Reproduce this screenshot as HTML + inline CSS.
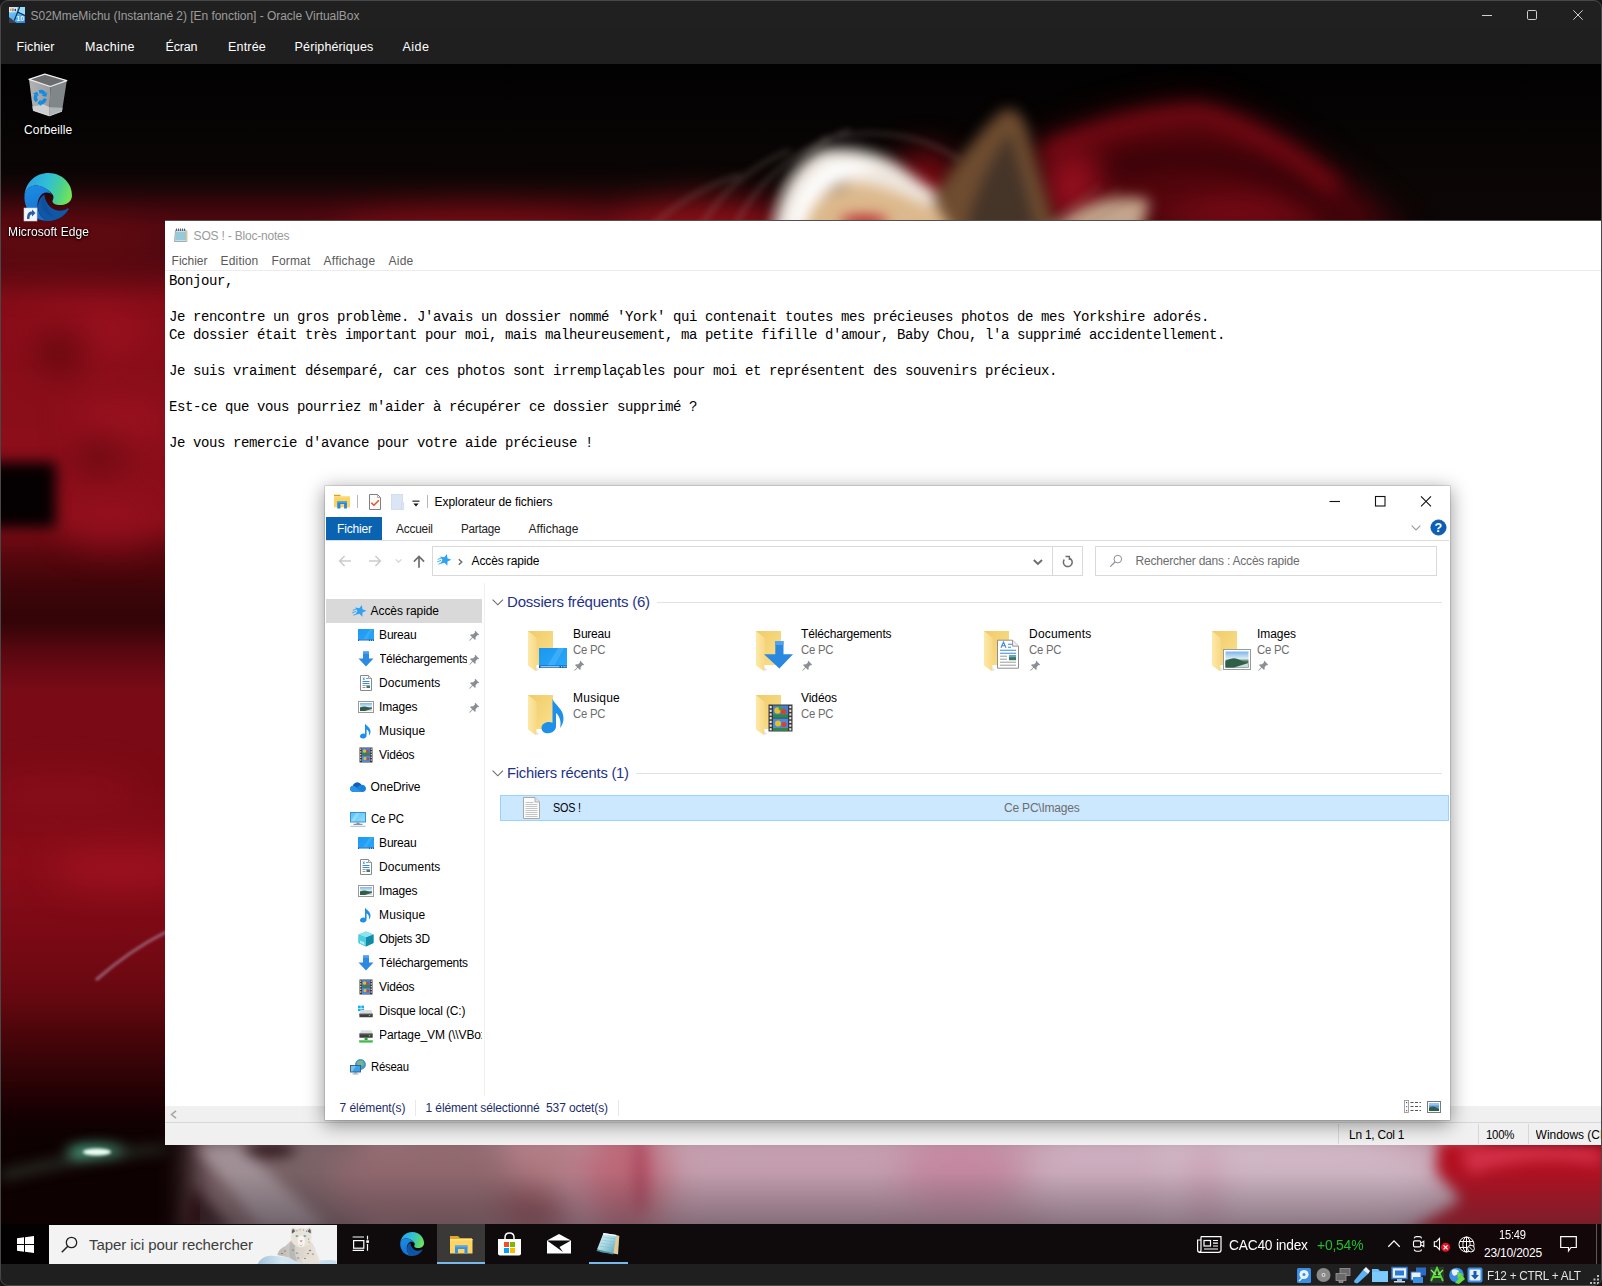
<!DOCTYPE html>
<html lang="fr"><head><meta charset="utf-8"><title>S02MmeMichu - Oracle VirtualBox</title>
<style>
html,body{margin:0;padding:0}
body{width:1602px;height:1286px;position:relative;overflow:hidden;background:#161616;font-family:"Liberation Sans",sans-serif;font-size:12px;color:#000}
.a{position:absolute}
.t{position:absolute;white-space:nowrap;line-height:16px;height:16px}
svg{position:absolute;overflow:visible}
.mono{font-family:"Liberation Mono",monospace;font-size:14px;letter-spacing:-0.402px;line-height:18px;white-space:pre;color:#000}
</style></head><body>
<!-- VM screen wallpaper -->
<div class="a" style="left:1px;top:64px;width:1600px;height:1200px;background:#040202;overflow:hidden">
<svg width="1600" height="1200" viewBox="1 64 1600 1200" style="left:0;top:0">
<defs>
<filter id="b30" x="-100%" y="-200%" width="300%" height="500%" color-interpolation-filters="sRGB"><feGaussianBlur stdDeviation="30"/></filter>
<filter id="b18" x="-100%" y="-200%" width="300%" height="500%" color-interpolation-filters="sRGB"><feGaussianBlur stdDeviation="16"/></filter>
<filter id="b8" x="-100%" y="-200%" width="300%" height="500%" color-interpolation-filters="sRGB"><feGaussianBlur stdDeviation="7"/></filter>
<filter id="b4" x="-100%" y="-200%" width="300%" height="500%" color-interpolation-filters="sRGB"><feGaussianBlur stdDeviation="3.5"/></filter>
<filter id="b2" x="-100%" y="-200%" width="300%" height="500%" color-interpolation-filters="sRGB"><feGaussianBlur stdDeviation="1.6"/></filter>
<linearGradient id="lstrip" x1="0" y1="220" x2="0" y2="1224" gradientUnits="userSpaceOnUse">
<stop offset="0" stop-color="#3c0509"/><stop offset=".03" stop-color="#6a0a12"/><stop offset=".08" stop-color="#880d19"/>
<stop offset=".3" stop-color="#8c0e1a"/><stop offset=".33" stop-color="#5c070e"/><stop offset=".365" stop-color="#3e0509"/>
<stop offset=".4" stop-color="#310407"/><stop offset=".43" stop-color="#5a0710"/><stop offset=".47" stop-color="#7a0b16"/><stop offset=".56" stop-color="#7a0a15"/>
<stop offset=".64" stop-color="#8a0c18"/><stop offset=".72" stop-color="#780914"/><stop offset=".775" stop-color="#660810"/><stop offset=".81" stop-color="#4a050a"/>
<stop offset=".85" stop-color="#300306"/><stop offset=".89" stop-color="#1a0103"/><stop offset=".94" stop-color="#100102"/><stop offset="1" stop-color="#0c0102"/>
</linearGradient>
<linearGradient id="tstrip" x1="0" y1="64" x2="0" y2="224" gradientUnits="userSpaceOnUse"><stop offset="0" stop-color="#020101"/><stop offset=".3" stop-color="#050303"/><stop offset=".75" stop-color="#0b0605"/><stop offset="1" stop-color="#0c0505"/></linearGradient>
<linearGradient id="bshade" x1="0" y1="1145" x2="0" y2="1224" gradientUnits="userSpaceOnUse"><stop offset="0" stop-color="#3a3038" stop-opacity="0"/><stop offset=".35" stop-color="#3a3038" stop-opacity=".05"/><stop offset="1" stop-color="#3a3038" stop-opacity=".46"/></linearGradient>
</defs>
<!-- left strip -->
<rect x="-40" y="215" width="260" height="1050" fill="url(#lstrip)" filter="url(#b8)"/>
<g filter="url(#b18)">
<ellipse cx="90" cy="330" rx="60" ry="30" fill="#a01222" opacity=".6"/>
<ellipse cx="120" cy="420" rx="50" ry="18" fill="#a81424" opacity=".6"/>
<ellipse cx="60" cy="350" rx="25" ry="25" fill="#5a060c" opacity=".7"/>
<ellipse cx="100" cy="455" rx="25" ry="20" fill="#5a060c" opacity=".6"/>
<ellipse cx="120" cy="870" rx="70" ry="22" fill="#a81424" opacity=".6"/>
<ellipse cx="60" cy="790" rx="80" ry="18" fill="#96101e" opacity=".5"/>
<ellipse cx="110" cy="520" rx="45" ry="30" fill="#981020" opacity=".6"/>
</g>
<rect x="-20" y="462" width="76" height="66" fill="#050001" filter="url(#b8)"/>
<!-- top strip -->
<rect x="1" y="64" width="1600" height="160" fill="url(#tstrip)"/>
<g filter="url(#b18)">
<rect x="-60" y="200" width="840" height="80" fill="#540810"/>
<ellipse cx="480" cy="236" rx="150" ry="30" fill="#7a0c14"/>
<ellipse cx="700" cy="232" rx="90" ry="34" fill="#8a1018"/>
<ellipse cx="60" cy="236" rx="90" ry="30" fill="#5e0910"/>
</g>
<g filter="url(#b18)">
<path d="M1030 150 Q1120 104 1200 104 Q1290 122 1405 235 L1030 235 Z" fill="#52050c"/>
<path d="M1140 235 Q1230 170 1350 235 Z" fill="#860b17"/>
<ellipse cx="925" cy="190" rx="34" ry="40" fill="#7a0a12"/>
<ellipse cx="1072" cy="185" rx="24" ry="36" fill="#9a1020"/>
</g>
<g filter="url(#b8)">
<path d="M1045 154 Q1120 118 1200 114 Q1262 130 1335 190" fill="none" stroke="#8c0c18" stroke-width="16" opacity=".8" filter="url(#b8)"/>
<path d="M1110 168 Q1200 146 1270 172 Q1310 192 1345 225" fill="none" stroke="#2e0206" stroke-width="24" opacity=".6" filter="url(#b8)"/>
<!-- dog: cream interior, white hair arc, ear -->
<path d="M790 235 Q815 185 870 180 Q940 195 1010 235 Z" fill="#dcb88c"/>
<path d="M772 236 Q780 170 822 150 Q866 144 900 166 Q940 198 975 214 L1040 236 L1000 236 Q950 214 905 196 Q870 180 842 184 Q812 196 800 236 Z" fill="#efe8e0"/>
<path d="M790 226 Q800 176 836 162 Q862 160 880 170 Q846 172 826 188 Q810 204 804 230 Z" fill="#ffffff"/>
<path d="M933 200 Q962 150 1000 112 Q1018 102 1027 128 Q1040 180 1058 235 L955 235 Z" fill="#6e4c30"/>
<path d="M968 220 Q988 160 1010 134 Q1026 190 1038 235 L975 235 Z" fill="#453428"/>
<path d="M1046 235 Q1090 188 1150 200 L1140 235 Z" fill="#c4a48c"/>
<ellipse cx="864" cy="222" rx="24" ry="6" fill="#b01020"/>
</g>
<g filter="url(#b4)" fill="none" stroke="#b0a098" stroke-width="2" opacity=".5">
<path d="M770 225 Q790 150 850 130"/><path d="M735 225 Q770 160 830 140"/><path d="M700 228 Q730 175 790 150"/>
<path d="M820 140 Q900 120 960 160"/><path d="M650 228 Q690 190 740 175"/>
<path d="M1060 230 L1120 190 M1075 232 L1135 196 M1050 222 L1100 186" stroke="#8a6a5a"/>
</g>
<!-- bottom strip -->
<g filter="url(#b18)">
<rect x="180" y="1120" width="1300" height="140" fill="#c8a0b0"/>
<rect x="-20" y="1120" width="215" height="140" fill="#0e0102"/>
<rect x="200" y="1120" width="170" height="140" fill="#7c6468"/>
<ellipse cx="440" cy="1185" rx="110" ry="60" fill="#936a70"/>
<ellipse cx="545" cy="1160" rx="40" ry="30" fill="#b47c84"/>
<ellipse cx="535" cy="1215" rx="36" ry="22" fill="#8e4a52"/>
<ellipse cx="625" cy="1180" rx="42" ry="60" fill="#c06a7a"/>
<ellipse cx="790" cy="1190" rx="110" ry="60" fill="#c8a2b2"/>
<ellipse cx="960" cy="1170" rx="60" ry="40" fill="#c88ca4"/>
<ellipse cx="1250" cy="1185" rx="190" ry="65" fill="#d4bac8"/>
<ellipse cx="1100" cy="1185" rx="70" ry="65" fill="#d0b0c2"/>
<ellipse cx="1205" cy="1190" rx="12" ry="50" fill="#cc9cb2"/>
</g>
<g filter="url(#b8)">
<path d="M196 1146 L240 1146 L330 1230 L262 1230 Z" fill="#a4949a"/>
<path d="M190 1185 L235 1232 L180 1232 Z" fill="#2a1216"/>
<ellipse cx="270" cy="1150" rx="26" ry="7" fill="#2a1418"/>
<ellipse cx="640" cy="1175" rx="7" ry="40" fill="#b04a62"/>
<path d="M1438 1140 L1620 1140 L1620 1235 L1404 1235 L1462 1200 L1436 1172 Z" fill="#b40f20"/>
<path d="M1460 1150 Q1530 1140 1600 1150 L1600 1165 Q1530 1152 1470 1175 Z" fill="#d83048"/>
<ellipse cx="97" cy="1152" rx="30" ry="6.500" fill="#58d0a8"/>
<path d="M1 1172 Q90 1150 165 1146 L165 1152 Q90 1158 1 1180 Z" fill="#3a4a38" opacity=".8"/>
</g>
<rect x="200" y="1145" width="1401" height="80" fill="url(#bshade)"/>
<g filter="url(#b2)">
<path d="M96 980 Q130 950 166 932" stroke="#b090a8" stroke-width="2.5" fill="none" opacity=".8"/>
<ellipse cx="97" cy="1152" rx="14" ry="3.500" fill="#eafff4"/>
</g>
</svg>
</div>
<!-- VirtualBox host window chrome -->
<div class="a" style="left:0;top:0;width:1602px;height:30px;background:#202020;border-radius:8px 8px 0 0"></div>
<div class="a" style="left:0;top:30px;width:1602px;height:34px;background:#1f1f1f"></div>
<svg width="16" height="16" viewBox="0 0 16 16" style="left:9px;top:7px">
<defs><linearGradient id="vbi" x1="0" y1="0" x2="1" y2="1"><stop offset="0" stop-color="#7fd0f8"/><stop offset=".6" stop-color="#4aaef0"/><stop offset="1" stop-color="#1f86f0"/></linearGradient></defs>
<rect x="0" y="0" width="16" height="16" fill="url(#vbi)"/>
<path d="M0 .300 L8.500 .300 L7.300 5.300 L0 5.300Z" fill="#e9f1f6"/>
<rect x="1" y="1.500" width="1.500" height="2.500" fill="#d8a040"/><rect x="3.300" y="1.300" width="1.300" height="3" fill="#8a6a58"/><rect x="5.600" y="1.800" width="1.400" height="2.400" fill="#2a3a8a"/>
<path d="M10.800 0 L16 0 L16 8 L9.300 5.200Z" fill="#a8e2fa" opacity=".85"/>
<path d="M0 10 L7.800 16 L0 16Z" fill="#3a3f4e"/>
<path d="M10.700 0 L5.300 13.500 M8.500 5 L16 8.500" stroke="#17283f" stroke-width="1.100" fill="none"/>
<text x="7.300" y="14" style="font-family:'Liberation Sans',sans-serif;font-weight:bold;font-size:7.200px" fill="#f4f6f8">10</text>
</svg>
<span class="t" style="left:30.6px;top:8px;font-size:12px;line-height:16px;height:16px;color:#9d9d9d;letter-spacing:-0.041px;">S02MmeMichu (Instantané 2) [En fonction] - Oracle VirtualBox</span>
<span class="t" style="left:16.6px;top:38.5px;font-size:12.5px;line-height:16px;height:16px;color:#ffffff;letter-spacing:0.041px;">Fichier</span>
<span class="t" style="left:85.1px;top:38.5px;font-size:12.5px;line-height:16px;height:16px;color:#ffffff;letter-spacing:0.364px;">Machine</span>
<span class="t" style="left:165.6px;top:38.5px;font-size:12.5px;line-height:16px;height:16px;color:#ffffff;letter-spacing:-0.171px;">Écran</span>
<span class="t" style="left:228.1px;top:38.5px;font-size:12.5px;line-height:16px;height:16px;color:#ffffff;letter-spacing:0.159px;">Entrée</span>
<span class="t" style="left:294.6px;top:38.5px;font-size:12.5px;line-height:16px;height:16px;color:#ffffff;letter-spacing:0.128px;">Périphériques</span>
<span class="t" style="left:402.6px;top:38.5px;font-size:12.5px;line-height:16px;height:16px;color:#ffffff;letter-spacing:0.442px;">Aide</span>
<svg width="120" height="30" viewBox="1470 0 120 30" style="left:1470px;top:0" fill="none" stroke="#cfcfcf" stroke-width="1">
<path d="M1482 15.5 H1492"/><rect x="1527.5" y="10.5" width="9" height="9" rx="1.2"/><path d="M1573.3 10.3 L1582.7 19.7 M1582.7 10.3 L1573.3 19.7"/>
</svg>
<!-- VirtualBox status bar -->
<div class="a" style="left:0;top:1264px;width:1602px;height:22px;background:#1f1f1f;border-radius:0 0 8px 8px"></div>
<!-- Desktop icons -->
<svg width="40" height="44" viewBox="0 0 40 44" style="left:28px;top:73px">
<defs><linearGradient id="bin1" x1="0" x2="1"><stop offset="0" stop-color="#b6b8ba"/><stop offset="1" stop-color="#9fa1a3"/></linearGradient></defs>
<path d="M1 6.300 L16.800 1.100 L38.800 7.600 L22.300 13.500 Z" fill="#6b6c6d"/>
<path d="M1 6.300 L22.300 13.500 L21.400 42.900 L5 37.400 Z" fill="url(#bin1)" opacity=".97"/>
<path d="M22.300 13.500 L38.800 7.600 L34 38.300 L21.400 42.900 Z" fill="#858a8d" opacity=".97"/>
<path d="M4.300 33.500 L16 31.600 L21.600 34.200 L21.400 42.900 L5 37.400 Z" fill="#d2d4d6" opacity=".9"/>
<path d="M21.600 34.200 L34.600 34.800 L34 38.300 L21.400 42.900Z" fill="#b4b9bc" opacity=".9"/>
<path d="M1 6.300 L16.800 1.100 L38.800 7.600 L22.300 13.500 Z" fill="none" stroke="#eceeef" stroke-width="1.300" stroke-linejoin="round"/>
<path d="M5 37.400 L21.400 42.900 L34 38.300" fill="none" stroke="#e4e6e8" stroke-width=".8" opacity=".8"/>
<g><path d="M11.11 18.79 A5.0 5.60 0 0 1 16.50 20.99" fill="none" stroke="#0f8be6" stroke-width="3.4"/><path d="M13.70 22.74 L18.30 23.87 L19.29 19.24Z" fill="#0f8be6"/><path d="M17.23 25.65 A5.0 5.60 0 0 1 12.84 29.78" fill="none" stroke="#0f8be6" stroke-width="3.4"/><path d="M12.51 26.49 L9.45 30.11 L13.16 33.06Z" fill="#0f8be6"/><path d="M8.86 28.16 A5.0 5.60 0 0 1 7.87 21.83" fill="none" stroke="#0f8be6" stroke-width="3.4"/><path d="M10.91 23.10 L9.18 18.69 L4.82 20.56Z" fill="#0f8be6"/></g>
</svg>
<span class="t" style="left:24.1px;top:122px;font-size:12px;line-height:16px;height:16px;color:#ffffff;letter-spacing:0.105px;text-shadow:0 1px 2px #000,0 0 3px #000;">Corbeille</span>
<svg width="48" height="48" viewBox="0 0 48 48" style="left:24px;top:173px">
<defs><linearGradient id="dEG1" x1="0" y1="0.300" x2="1" y2="0.550"><stop offset="0" stop-color="#2a9fe8"/><stop offset=".45" stop-color="#30bfd6"/><stop offset=".75" stop-color="#4ad090"/><stop offset="1" stop-color="#74e456"/></linearGradient><linearGradient id="dEG2" x1="0" y1="0" x2="0.300" y2="1"><stop offset="0" stop-color="#1d8de4"/><stop offset="1" stop-color="#1670d2"/></linearGradient></defs><path d="M0.500 22.500 C1.500 9 12 0 24.500 0 C38.500 0 48.500 11 48 23 C47.600 29.500 41.500 32.500 34.500 32 C30.500 31.600 27.800 29.800 28.600 27.500 C29.800 25.500 30 22.500 27.800 20.500 C24.500 17 19 12.800 11.500 12.600 C6 13 1.500 17 0.500 22.500 Z" fill="url(#dEG1)"/>
<path d="M0.500 22.500 C1.500 16.500 6 12.800 12 12.600 C19.500 12.700 25 17 28.300 22 C25.500 19.300 21.500 19 19 20.500 C15 23 13 29 13.600 34 C14.200 39.500 17 44.500 22 47.900 C9.500 47 -0.500 36 0.500 22.500 Z" fill="url(#dEG2)"/>
<path d="M20.200 21.500 C16 24.500 13.500 30 14 35 C14.600 40.500 17.500 45 22 47.900 C29 48.500 35.500 46 40 42 C42.200 40 43.800 38 44.600 36.300 C45 35.300 44.200 34.900 43.400 35.500 C40 37.800 35.500 38.300 31.500 37 C26 35 21.500 30 20.200 21.500 Z" fill="#1057a8"/>
<path d="M20.200 21.500 C18 23.500 16.800 28 17.500 33 C19 38 24 43 31 44 C26 41 21 32 20.200 21.500Z" fill="#0c4a94" opacity=".5"/>
<rect x="0" y="35" width="13" height="13" fill="#f4f6f8" stroke="#c8ccd0" stroke-width=".6"/>
<path d="M3 46 C3 40 5 38.500 8 38.500 L8 36.500 L11.500 40 L8 43.500 L8 41.500 C6 41.500 5.500 43 5.500 46 Z" fill="#2a5ea8"/>
</svg>
<span class="t" style="left:8.1px;top:224px;font-size:12px;line-height:16px;height:16px;color:#ffffff;letter-spacing:0.054px;text-shadow:0 1px 2px #000,0 0 3px #000;">Microsoft Edge</span>
<!-- Notepad window -->
<div class="a" style="left:165px;top:220px;width:1436px;height:925px;background:#fff;border-top:1px solid rgba(40,30,30,.78);box-sizing:border-box"></div>
<div class="a" style="left:165px;top:270px;width:1436px;height:1px;background:#ececec"></div>
<div class="a" style="left:165px;top:1106px;width:1436px;height:39px;background:#f0f0f0"></div>
<div class="a" style="left:165px;top:1122px;width:1436px;height:1px;background:#d7d7d7"></div>
<svg width="16" height="16" viewBox="0 0 16 16" style="left:173px;top:227px">
<path d="M2.500 3 L13 3 L13.500 14.500 L1.500 14.500 Z" fill="#bfe3ee" stroke="#8a8f94" stroke-width=".7"/>
<path d="M12.500 3 L14.500 4 L14.500 15 L13 14.500Z" fill="#d9c9a0"/>
<g stroke="#5f9fb6" stroke-width=".8"><path d="M3 6 H12.500 M3 8 H12.500 M2.800 10 H12.700 M2.600 12 H12.900"/></g>
<g stroke="#50545a" stroke-width=".9"><path d="M3.500 1.500 V4 M5.500 1.500 V4 M7.500 1.500 V4 M9.500 1.500 V4 M11.500 1.500 V4"/></g>
</svg>
<span class="t" style="left:193.6px;top:227.5px;font-size:12px;line-height:16px;height:16px;color:#9a9a9a;letter-spacing:-0.199px;">SOS ! - Bloc-notes</span>
<span class="t" style="left:171.6px;top:252.5px;font-size:12px;line-height:16px;height:16px;color:#5a5a5a;letter-spacing:-0.031px;">Fichier</span>
<span class="t" style="left:220.6px;top:252.5px;font-size:12px;line-height:16px;height:16px;color:#5a5a5a;letter-spacing:0.157px;">Edition</span>
<span class="t" style="left:271.6px;top:252.5px;font-size:12px;line-height:16px;height:16px;color:#5a5a5a;letter-spacing:0.131px;">Format</span>
<span class="t" style="left:323.6px;top:252.5px;font-size:12px;line-height:16px;height:16px;color:#5a5a5a;letter-spacing:0.219px;">Affichage</span>
<span class="t" style="left:388.6px;top:252.5px;font-size:12px;line-height:16px;height:16px;color:#5a5a5a;letter-spacing:0.192px;">Aide</span>
<div class="a mono" style="left:169.100px;top:272.300px">Bonjour,

Je rencontre un gros problème. J'avais un dossier nommé 'York' qui contenait toutes mes précieuses photos de mes Yorkshire adorés.
Ce dossier était très important pour moi, mais malheureusement, ma petite fifille d'amour, Baby Chou, l'a supprimé accidentellement.

Je suis vraiment désemparé, car ces photos sont irremplaçables pour moi et représentent des souvenirs précieux.

Est-ce que vous pourriez m'aider à récupérer ce dossier supprimé ?

Je vous remercie d'avance pour votre aide précieuse !</div>
<svg width="8" height="9" viewBox="0 0 8 9" style="left:169.500px;top:1109.500px"><path d="M6 .8 L1.500 4.500 L6 8.200" fill="none" stroke="#a6a6a6" stroke-width="1.600"/></svg>
<div class="a" style="left:1338px;top:1124px;width:1px;height:20px;background:#d7d7d7"></div>
<div class="a" style="left:1478px;top:1124px;width:1px;height:20px;background:#d7d7d7"></div>
<div class="a" style="left:1528px;top:1124px;width:1px;height:20px;background:#d7d7d7"></div>
<span class="t" style="left:1348.6px;top:1126.5px;font-size:12px;line-height:16px;height:16px;color:#000;letter-spacing:-0.220px;transform:scaleX(0.9941);transform-origin:0 50%;">Ln 1, Col 1</span>
<span class="t" style="left:1486.1px;top:1126.5px;font-size:12px;line-height:16px;height:16px;color:#000;letter-spacing:-0.220px;transform:scaleX(0.9489);transform-origin:0 50%;">100%</span>
<div class="a" style="left:1536px;top:1126px;width:65px;height:17px;overflow:hidden"><span class="t" style="left:-0.4px;top:0.5px;font-size:12px;line-height:16px;height:16px;color:#000;letter-spacing:-0.039px;">Windows (CRLF)</span></div>
<!-- File Explorer window -->
<div class="a" style="left:325px;top:486px;width:1125px;height:634px;background:#fff;box-shadow:0 0 0 .6px rgba(0,0,0,.2),0 4px 18px 1px rgba(0,0,0,.40)"></div>
<svg width="17" height="16" viewBox="0 0 17 16" style="left:334px;top:493.500px"><path d="M0 .700 H6 L7.200 2.400 H0Z" fill="#dfa012"/><rect x="0" y="2.400" width="16" height="11" fill="#fcd462"/><rect x="0" y="2.400" width="16" height="1" fill="#fde08c"/><path d="M3.300 7.500 H12.900 V14.500 H10.100 V10 H6.400 V14.500 H3.300Z" fill="#2585e0"/><rect x="3.300" y="7.500" width="9.600" height="1.500" fill="#3f9bec"/></svg>
<div class="a" style="left:357px;top:495px;width:1px;height:13px;background:#b8b8b8"></div>
<svg width="14" height="17" viewBox="0 0 14 17" style="left:369px;top:494px"><path d="M.500 .500 H8.500 L11.500 3.500 V15.500 H.500 Z" fill="#fbfbfb" stroke="#808080" stroke-width="1" stroke-linejoin="miter"/><path d="M8.500 .500 V3.500 H11.500" fill="none" stroke="#9a9a9a" stroke-width=".8"/><path d="M2.300 8.700 L4.900 11.200 L9.900 6.200" fill="none" stroke="#e8501e" stroke-width="1.500"/></svg>
<svg width="14" height="17" viewBox="0 0 14 17" style="left:391px;top:494.200px"><rect x=".300" y=".300" width="11.400" height="15.300" fill="#dbe5f4" stroke="#c6d4ea" stroke-width=".600"/><rect x="10.800" y="8.800" width="2" height="6.800" fill="#e1e9f6" stroke="#c6d4ea" stroke-width=".600"/></svg>
<svg width="8" height="8" viewBox="0 0 8 8" style="left:411.500px;top:498.500px"><rect x=".400" y="1.600" width="7.100" height="1.100" fill="#111"/><path d="M1.400 4.600 H6.600 L4 7.500Z" fill="#111"/></svg>
<div class="a" style="left:427px;top:495px;width:1px;height:13px;background:#b8b8b8"></div>
<span class="t" style="left:434.6px;top:493.5px;font-size:12px;line-height:16px;height:16px;color:#000;letter-spacing:-0.069px;">Explorateur de fichiers</span>
<svg width="110" height="20" viewBox="1325 492 110 20" style="left:1325px;top:492px" fill="none" stroke="#111" stroke-width="1.100"><path d="M1329.500 501.500 H1340"/><rect x="1375.500" y="496.500" width="9.500" height="9.500"/><path d="M1421 496.300 L1431 506.300 M1431 496.300 L1421 506.300"/></svg>
<div class="a" style="left:326px;top:517px;width:56px;height:23px;background:#0a63b1"></div>
<span class="t" style="left:337.1px;top:521px;font-size:12px;line-height:16px;height:16px;color:#ffffff;letter-spacing:-0.174px;">Fichier</span>
<span class="t" style="left:395.6px;top:521px;font-size:12px;line-height:16px;height:16px;color:#222;letter-spacing:-0.220px;transform:scaleX(0.9906);transform-origin:0 50%;">Accueil</span>
<span class="t" style="left:461.1px;top:521px;font-size:12px;line-height:16px;height:16px;color:#222;letter-spacing:-0.220px;transform:scaleX(0.9706);transform-origin:0 50%;">Partage</span>
<span class="t" style="left:528.6px;top:521px;font-size:12px;line-height:16px;height:16px;color:#222;letter-spacing:-0.003px;">Affichage</span>
<div class="a" style="left:326px;top:540px;width:1123px;height:1px;background:#dadbdc"></div>
<svg width="10" height="6" viewBox="0 0 10 6" style="left:1410.800px;top:525.200px"><path d="M.700 .700 L5 5 L9.300 .700" fill="none" stroke="#9a9a9a" stroke-width="1.100"/></svg>
<svg width="17" height="17" viewBox="0 0 17 17" style="left:1429.500px;top:519.300px"><circle cx="8.500" cy="8.500" r="7.600" fill="#0c5fb6" stroke="#0a4c94" stroke-width=".8"/></svg>
<span class="t" style="left:1434.4px;top:520px;font-size:12.5px;line-height:16px;height:16px;color:#ffffff;font-weight:bold;">?</span>
<svg width="100" height="20" viewBox="335 551 100 20" style="left:335px;top:551px" fill="none" stroke-linecap="butt"><g stroke="#cbcbcb" stroke-width="1.500"><path d="M351 561 H339.800 M344.600 556 L339.600 561 L344.600 566"/><path d="M369 561 H380.200 M375.400 556 L380.400 561 L375.400 566"/></g><path d="M395.800 559.300 L398.600 562.100 L401.400 559.300" stroke="#d2d2d2" stroke-width="1.200"/><g stroke="#6e6e6e" stroke-width="1.700"><path d="M419 567.700 V557 M413.900 561.600 L419 556.500 L424.100 561.600"/></g></svg>
<div class="a" style="left:432px;top:546px;width:651px;height:30px;border:1px solid #d9d9d9;box-sizing:border-box;background:#fff"></div>
<div class="a" style="left:1052px;top:547px;width:1px;height:28px;background:#d9d9d9"></div>
<svg width="14" height="14" viewBox="0 0 16 16" style="left:437px;top:553px"><path d="M11.33 1.27 L11.92 6.03 L16.40 7.76 L12.05 9.79 L11.79 14.58 L8.52 11.08 L3.88 12.31 L6.20 8.11 L3.60 4.09 L8.31 4.99Z" fill="#2fa2f4"/><path d="M.800 7.400 L5 5.600 M.200 10.200 L4.800 8.300 M1.600 12.900 L5.800 10.900" stroke="#3aa4f2" stroke-width="1.100" fill="none"/></svg>
<svg width="5" height="8" viewBox="0 0 5 8" style="left:458px;top:557.500px"><path d="M.800 1.300 L3.700 4 L.800 6.700" fill="none" stroke="#6e6e6e" stroke-width="1.500"/></svg>
<span class="t" style="left:471.6px;top:553px;font-size:12px;line-height:16px;height:16px;color:#000;letter-spacing:-0.131px;">Accès rapide</span>
<svg width="10" height="7" viewBox="0 0 10 7" style="left:1033px;top:559px"><path d="M.800 1 L4.900 5 L9 1" fill="none" stroke="#6e6e6e" stroke-width="1.900"/></svg>
<svg width="14" height="14" viewBox="1061 555 14 14" style="left:1061px;top:555px" fill="none" stroke="#6e6e6e" stroke-width="1.500"><path d="M1069.600 558.200 A4.400 4.400 0 1 1 1064.300 559.500"/><path d="M1065.500 556.500 H1069.400 V560" stroke-width="1.400"/></svg>
<div class="a" style="left:1095px;top:546px;width:342px;height:30px;border:1px solid #d9d9d9;box-sizing:border-box;background:#fff"></div>
<svg width="13" height="13" viewBox="1109 554 13 13" style="left:1109px;top:554px"><circle cx="1117.800" cy="559.100" r="3.800" fill="none" stroke="#8c8c9c" stroke-width="1"/><path d="M1115 562 L1110.300 566.700" stroke="#8c8c9c" stroke-width="1.200"/></svg>
<span class="t" style="left:1135.6px;top:553px;font-size:12px;line-height:16px;height:16px;color:#6d6d6d;letter-spacing:-0.210px;">Rechercher dans : Accès rapide</span>
<div class="a" style="left:326px;top:599px;width:156px;height:24px;background:#d9d9d9"></div>
<div class="a" style="left:484px;top:583px;width:1px;height:513px;background:#f0f0f0"></div>
<svg width="14" height="14" viewBox="0 0 16 16" style="left:352px;top:604px"><path d="M11.33 1.27 L11.92 6.03 L16.40 7.76 L12.05 9.79 L11.79 14.58 L8.52 11.08 L3.88 12.31 L6.20 8.11 L3.60 4.09 L8.31 4.99Z" fill="#2fa2f4"/><path d="M.800 7.400 L5 5.600 M.200 10.200 L4.800 8.300 M1.600 12.900 L5.800 10.900" stroke="#3aa4f2" stroke-width="1.100" fill="none"/></svg>
<span class="t" style="left:370.6px;top:603px;font-size:12px;line-height:16px;height:16px;color:#000;letter-spacing:-0.090px;">Accès rapide</span>
<svg width="16" height="16" viewBox="0 0 16 16" style="left:358px;top:627px"><defs><linearGradient id="dks1" x1="0" y1="0" x2="1" y2="1"><stop offset="0" stop-color="#1c9bf2"/><stop offset="1" stop-color="#2aa5f8"/></linearGradient></defs><rect x="0" y="2" width="16" height="12" fill="url(#dks1)"/><path d="M4 14 L12 2 L15 2 L8 14Z" fill="#4ab6fb" opacity=".5"/><rect x="0" y="12.300" width="16" height="1.700" fill="#0a62b8"/><rect x="1" y="12.800" width="10" height=".8" fill="#d8ecfa"/><rect x="12" y="12.800" width="1" height=".8" fill="#fff"/><rect x="14" y="12.800" width="1" height=".8" fill="#fff"/></svg>
<span class="t" style="left:379.1px;top:627px;font-size:12px;line-height:16px;height:16px;color:#000;letter-spacing:-0.220px;">Bureau</span>
<svg width="11" height="11" viewBox="0 0 11 11" style="left:468.5px;top:629.5px"><path d="M6.300 .800 L10.200 4.700 L9.300 5.300 L8.600 5 L6.500 7.200 C6.900 8.300 6.700 9.300 6 10 L3.800 7.800 L.800 10.700 L.400 10.600 L.300 10.200 L3.200 7.200 L1 5 C1.700 4.300 2.700 4.100 3.800 4.500 L6 2.400 L5.700 1.700 Z" fill="#8a8f96"/></svg>
<svg width="16" height="16" viewBox="0 0 16 16" style="left:358px;top:651px"><path d="M5 0.500 H11 V7.500 H15.500 L8 15.500 L0.500 7.500 H5 Z" fill="#2b8ae2"/><path d="M5 0.500 H11 V3 H5Z" fill="#4aa0ee"/></svg>
<div class="a" style="left:379.5px;top:650px;width:87.0px;height:18px;overflow:hidden"><span class="t" style="left:-0.4px;top:1px;font-size:12px;line-height:16px;height:16px;color:#000;letter-spacing:-0.220px;transform:scaleX(0.9931);transform-origin:0 50%;">Téléchargements</span></div>
<svg width="11" height="11" viewBox="0 0 11 11" style="left:468.5px;top:653.5px"><path d="M6.300 .800 L10.200 4.700 L9.300 5.300 L8.600 5 L6.500 7.200 C6.900 8.300 6.700 9.300 6 10 L3.800 7.800 L.800 10.700 L.400 10.600 L.300 10.200 L3.200 7.200 L1 5 C1.700 4.300 2.700 4.100 3.800 4.500 L6 2.400 L5.700 1.700 Z" fill="#8a8f96"/></svg>
<svg width="16" height="16" viewBox="0 0 16 16" style="left:358px;top:675px"><path d="M2.500 .500 H10.500 L13.500 3.500 V15.500 H2.500 Z" fill="#fff" stroke="#8a8a8a" stroke-width="1"/><path d="M10.500 .500 V3.500 H13.500" fill="#e8e8e8" stroke="#8a8a8a" stroke-width=".8"/><g stroke="#3c8ad8" stroke-width="1"><path d="M4.500 6.500 H11.500 M4.500 8.500 H11.500"/></g><path d="M5 2.500 L6.500 5 M6.500 2.500 L5 5" stroke="#3c8ad8" stroke-width=".8"/><path d="M8 3.500 H10" stroke="#3c8ad8" stroke-width=".8"/><g stroke="#9a9a9a" stroke-width="1"><path d="M4.500 10.500 H7.500 M4.500 12.500 H7.500"/></g><rect x="8.500" y="10" width="3.500" height="3" fill="#3b7a57"/><rect x="8.500" y="10" width="3.500" height="1.200" fill="#6aa6dc"/></svg>
<span class="t" style="left:379.1px;top:675px;font-size:12px;line-height:16px;height:16px;color:#000;letter-spacing:0.066px;">Documents</span>
<svg width="11" height="11" viewBox="0 0 11 11" style="left:468.5px;top:677.5px"><path d="M6.300 .800 L10.200 4.700 L9.300 5.300 L8.600 5 L6.500 7.200 C6.900 8.300 6.700 9.300 6 10 L3.800 7.800 L.800 10.700 L.400 10.600 L.300 10.200 L3.200 7.200 L1 5 C1.700 4.300 2.700 4.100 3.800 4.500 L6 2.400 L5.700 1.700 Z" fill="#8a8f96"/></svg>
<svg width="16" height="16" viewBox="0 0 16 16" style="left:358px;top:699px"><defs><linearGradient id="ims4" x1="0" y1="0" x2="0" y2="1"><stop offset="0" stop-color="#7db7ea"/><stop offset=".45" stop-color="#dbeaf6"/><stop offset=".6" stop-color="#4c7a5a"/><stop offset="1" stop-color="#24503a"/></linearGradient></defs><rect x=".500" y="2.500" width="15" height="11" fill="#fff" stroke="#9a9a9a" stroke-width="1"/><rect x="2" y="4" width="12" height="8" fill="url(#ims4)"/><path d="M2 9 Q6 6.500 10 8.500 L14 10.500 V12 H2Z" fill="#2f5f48"/><path d="M7 12 L14 9.800 V12Z" fill="#e8eef2" opacity=".85"/></svg>
<span class="t" style="left:379.1px;top:699px;font-size:12px;line-height:16px;height:16px;color:#000;letter-spacing:-0.177px;">Images</span>
<svg width="11" height="11" viewBox="0 0 11 11" style="left:468.5px;top:701.5px"><path d="M6.300 .800 L10.200 4.700 L9.300 5.300 L8.600 5 L6.500 7.200 C6.900 8.300 6.700 9.300 6 10 L3.800 7.800 L.800 10.700 L.400 10.600 L.300 10.200 L3.200 7.200 L1 5 C1.700 4.300 2.700 4.100 3.800 4.500 L6 2.400 L5.700 1.700 Z" fill="#8a8f96"/></svg>
<svg width="16" height="16" viewBox="0 0 16 16" style="left:358px;top:723px"><path d="M7 .500 C8.500 3 12.500 4.500 12.500 8.500 C12.500 10.500 11.700 11.800 10.800 12.600 C11.600 10.200 10.800 7.600 8.600 6.200 V12.500 C8.600 14.500 6.800 15.600 5 15.600 C3.200 15.600 2 14.600 2 13.300 C2 11.800 3.500 10.600 5.400 10.600 C6 10.600 6.600 10.700 7 10.900 Z" fill="#1e90ea"/></svg>
<span class="t" style="left:379.1px;top:723px;font-size:12px;line-height:16px;height:16px;color:#000;letter-spacing:0.134px;">Musique</span>
<svg width="16" height="16" viewBox="0 0 16 16" style="left:358px;top:747px"><rect x="1.500" y=".500" width="13" height="15" fill="#3a3a3a"/><rect x="4" y="1" width="8" height="6.800" fill="#3f7fd6"/><rect x="4" y="8.400" width="8" height="6.600" fill="#4a8ade"/><circle cx="6.500" cy="4" r="1.700" fill="#e8c020"/><circle cx="9.500" cy="4.500" r="1.500" fill="#d84030"/><circle cx="7" cy="11.500" r="1.600" fill="#e8c020"/><circle cx="9.800" cy="12" r="1.400" fill="#d84030"/><rect x="4" y="6" width="8" height="1.800" fill="#2c8a3c"/><g fill="#e8e8e8"><rect x="2.200" y="1.500" width="1.100" height="1.400"/><rect x="2.200" y="4.200" width="1.100" height="1.400"/><rect x="2.200" y="6.900" width="1.100" height="1.400"/><rect x="2.200" y="9.600" width="1.100" height="1.400"/><rect x="2.200" y="12.300" width="1.100" height="1.400"/><rect x="12.700" y="1.500" width="1.100" height="1.400"/><rect x="12.700" y="4.200" width="1.100" height="1.400"/><rect x="12.700" y="6.900" width="1.100" height="1.400"/><rect x="12.700" y="9.600" width="1.100" height="1.400"/><rect x="12.700" y="12.300" width="1.100" height="1.400"/></g></svg>
<span class="t" style="left:379.1px;top:747px;font-size:12px;line-height:16px;height:16px;color:#000;letter-spacing:-0.197px;">Vidéos</span>
<svg width="16" height="16" viewBox="0 0 16 16" style="left:350px;top:779px"><path d="M3.800 13 C1.500 13 0 11.600 0 9.800 C0 8.100 1.300 6.900 2.900 6.700 C3.500 4.700 5.200 3.400 7.300 3.400 C9.100 3.400 10.600 4.300 11.400 5.800 C13.900 5.700 16 7.300 16 9.700 C16 11.600 14.500 13 12.500 13 Z" fill="#1a80d8"/><path d="M2.900 6.700 C3.500 4.700 5.200 3.400 7.300 3.400 C9.100 3.400 10.600 4.300 11.400 5.800 C9 6 7.600 7.600 6.600 9 C5.600 7.600 4.400 6.800 2.900 6.700Z" fill="#0f5fb8"/><path d="M3.800 13 C1.500 13 0 11.600 0 9.800 C0 8.100 1.300 6.900 2.900 6.700 C5 6.800 6.400 8.400 7.500 10 L12 13Z" fill="#2a94e6"/></svg>
<span class="t" style="left:370.6px;top:779px;font-size:12px;line-height:16px;height:16px;color:#000;letter-spacing:-0.111px;">OneDrive</span>
<svg width="16" height="16" viewBox="0 0 16 16" style="left:350px;top:811px"><defs><linearGradient id="pcgs8" x1="0" y1="0" x2="1" y2="1"><stop offset="0" stop-color="#4fc4f6"/><stop offset="1" stop-color="#9addfa"/></linearGradient></defs><rect x=".500" y="1.500" width="15" height="9.500" fill="url(#pcgs8)" stroke="#3a90d4" stroke-width="1"/><path d="M6 2 L10 2 L4 10.500 L1 10.500Z" fill="#fff" opacity=".25"/><rect x="6.500" y="11.500" width="3" height="1.500" fill="#8a9aa8"/><rect x="3.500" y="12.800" width="9" height="1" fill="#6a7a88"/><rect x=".500" y="14.800" width="15" height=".9" fill="#9ab0c8"/></svg>
<span class="t" style="left:370.6px;top:811px;font-size:12px;line-height:16px;height:16px;color:#000;letter-spacing:-0.220px;transform:scaleX(0.9578);transform-origin:0 50%;">Ce PC</span>
<svg width="16" height="16" viewBox="0 0 16 16" style="left:358px;top:835px"><defs><linearGradient id="dks9" x1="0" y1="0" x2="1" y2="1"><stop offset="0" stop-color="#1c9bf2"/><stop offset="1" stop-color="#2aa5f8"/></linearGradient></defs><rect x="0" y="2" width="16" height="12" fill="url(#dks9)"/><path d="M4 14 L12 2 L15 2 L8 14Z" fill="#4ab6fb" opacity=".5"/><rect x="0" y="12.300" width="16" height="1.700" fill="#0a62b8"/><rect x="1" y="12.800" width="10" height=".8" fill="#d8ecfa"/><rect x="12" y="12.800" width="1" height=".8" fill="#fff"/><rect x="14" y="12.800" width="1" height=".8" fill="#fff"/></svg>
<span class="t" style="left:379.1px;top:835px;font-size:12px;line-height:16px;height:16px;color:#000;letter-spacing:-0.220px;">Bureau</span>
<svg width="16" height="16" viewBox="0 0 16 16" style="left:358px;top:859px"><path d="M2.500 .500 H10.500 L13.500 3.500 V15.500 H2.500 Z" fill="#fff" stroke="#8a8a8a" stroke-width="1"/><path d="M10.500 .500 V3.500 H13.500" fill="#e8e8e8" stroke="#8a8a8a" stroke-width=".8"/><g stroke="#3c8ad8" stroke-width="1"><path d="M4.500 6.500 H11.500 M4.500 8.500 H11.500"/></g><path d="M5 2.500 L6.500 5 M6.500 2.500 L5 5" stroke="#3c8ad8" stroke-width=".8"/><path d="M8 3.500 H10" stroke="#3c8ad8" stroke-width=".8"/><g stroke="#9a9a9a" stroke-width="1"><path d="M4.500 10.500 H7.500 M4.500 12.500 H7.500"/></g><rect x="8.500" y="10" width="3.500" height="3" fill="#3b7a57"/><rect x="8.500" y="10" width="3.500" height="1.200" fill="#6aa6dc"/></svg>
<span class="t" style="left:379.1px;top:859px;font-size:12px;line-height:16px;height:16px;color:#000;letter-spacing:0.066px;">Documents</span>
<svg width="16" height="16" viewBox="0 0 16 16" style="left:358px;top:883px"><defs><linearGradient id="ims11" x1="0" y1="0" x2="0" y2="1"><stop offset="0" stop-color="#7db7ea"/><stop offset=".45" stop-color="#dbeaf6"/><stop offset=".6" stop-color="#4c7a5a"/><stop offset="1" stop-color="#24503a"/></linearGradient></defs><rect x=".500" y="2.500" width="15" height="11" fill="#fff" stroke="#9a9a9a" stroke-width="1"/><rect x="2" y="4" width="12" height="8" fill="url(#ims11)"/><path d="M2 9 Q6 6.500 10 8.500 L14 10.500 V12 H2Z" fill="#2f5f48"/><path d="M7 12 L14 9.800 V12Z" fill="#e8eef2" opacity=".85"/></svg>
<span class="t" style="left:379.1px;top:883px;font-size:12px;line-height:16px;height:16px;color:#000;letter-spacing:-0.177px;">Images</span>
<svg width="16" height="16" viewBox="0 0 16 16" style="left:358px;top:907px"><path d="M7 .500 C8.500 3 12.500 4.500 12.500 8.500 C12.500 10.500 11.700 11.800 10.800 12.600 C11.600 10.200 10.800 7.600 8.600 6.200 V12.500 C8.600 14.500 6.800 15.600 5 15.600 C3.200 15.600 2 14.600 2 13.300 C2 11.800 3.500 10.600 5.400 10.600 C6 10.600 6.600 10.700 7 10.900 Z" fill="#1e90ea"/></svg>
<span class="t" style="left:379.1px;top:907px;font-size:12px;line-height:16px;height:16px;color:#000;letter-spacing:0.134px;">Musique</span>
<svg width="16" height="16" viewBox="0 0 16 16" style="left:358px;top:931px"><path d="M8 .500 L15.500 3.500 V12 L8 15.500 L.500 12 V3.500 Z" fill="#36c0d8"/><path d="M8 .500 L15.500 3.500 L8 6.500 L.500 3.500Z" fill="#8ee4ee"/><path d="M8 6.500 L15.500 3.500 V12 L8 15.500Z" fill="#128aa8"/><path d="M.500 3.500 L8 6.500 V15.500 L.500 12Z" fill="#4ad0e2"/><path d="M2 9.500 L6.500 11.500 V14 L2 12Z" fill="#d8f6fa" opacity=".7"/></svg>
<span class="t" style="left:379.1px;top:931px;font-size:12px;line-height:16px;height:16px;color:#000;letter-spacing:-0.220px;transform:scaleX(0.9887);transform-origin:0 50%;">Objets 3D</span>
<svg width="16" height="16" viewBox="0 0 16 16" style="left:358px;top:955px"><path d="M5 0.500 H11 V7.500 H15.500 L8 15.500 L0.500 7.500 H5 Z" fill="#2b8ae2"/><path d="M5 0.500 H11 V3 H5Z" fill="#4aa0ee"/></svg>
<span class="t" style="left:379.1px;top:955px;font-size:12px;line-height:16px;height:16px;color:#000;letter-spacing:-0.220px;transform:scaleX(0.9931);transform-origin:0 50%;">Téléchargements</span>
<svg width="16" height="16" viewBox="0 0 16 16" style="left:358px;top:979px"><rect x="1.500" y=".500" width="13" height="15" fill="#3a3a3a"/><rect x="4" y="1" width="8" height="6.800" fill="#3f7fd6"/><rect x="4" y="8.400" width="8" height="6.600" fill="#4a8ade"/><circle cx="6.500" cy="4" r="1.700" fill="#e8c020"/><circle cx="9.500" cy="4.500" r="1.500" fill="#d84030"/><circle cx="7" cy="11.500" r="1.600" fill="#e8c020"/><circle cx="9.800" cy="12" r="1.400" fill="#d84030"/><rect x="4" y="6" width="8" height="1.800" fill="#2c8a3c"/><g fill="#e8e8e8"><rect x="2.200" y="1.500" width="1.100" height="1.400"/><rect x="2.200" y="4.200" width="1.100" height="1.400"/><rect x="2.200" y="6.900" width="1.100" height="1.400"/><rect x="2.200" y="9.600" width="1.100" height="1.400"/><rect x="2.200" y="12.300" width="1.100" height="1.400"/><rect x="12.700" y="1.500" width="1.100" height="1.400"/><rect x="12.700" y="4.200" width="1.100" height="1.400"/><rect x="12.700" y="6.900" width="1.100" height="1.400"/><rect x="12.700" y="9.600" width="1.100" height="1.400"/><rect x="12.700" y="12.300" width="1.100" height="1.400"/></g></svg>
<span class="t" style="left:379.1px;top:979px;font-size:12px;line-height:16px;height:16px;color:#000;letter-spacing:-0.197px;">Vidéos</span>
<svg width="16" height="16" viewBox="0 0 16 16" style="left:358px;top:1003px"><g fill="#19b0f0"><rect x="0" y="2.600" width="2.700" height="2.500"/><rect x="3.300" y="2.600" width="2.700" height="2.500"/><rect x="0" y="5.700" width="2.700" height="2.500"/><rect x="3.300" y="5.700" width="2.700" height="2.500"/></g><path d="M3.200 7 H13.300 L14.700 10.700 H1.400Z" fill="#d9dbdd"/><rect x="1.400" y="10.700" width="13.300" height="3.600" rx=".500" fill="#3c3e40"/><rect x="1.400" y="10.700" width="13.300" height=".800" fill="#6a6c6e"/><rect x="10.900" y="12" width="1.300" height="1.100" fill="#5af04a"/></svg>
<span class="t" style="left:379.1px;top:1003px;font-size:12px;line-height:16px;height:16px;color:#000;letter-spacing:-0.141px;">Disque local (C:)</span>
<svg width="16" height="16" viewBox="0 0 16 16" style="left:358px;top:1027px"><path d="M3.200 3.200 H13.300 L14.700 6.600 H1.400Z" fill="#d9dbdd"/><rect x="1.400" y="6.600" width="13.300" height="4.200" rx=".500" fill="#3c3e40"/><rect x="1.400" y="6.600" width="13.300" height=".800" fill="#6a6c6e"/><rect x="10.900" y="8.200" width="1.300" height="1.100" fill="#5af04a"/><rect x="6.600" y="10.800" width="3" height="2.600" fill="#2f9a3c"/><rect x="1.200" y="13.200" width="13.500" height="2.400" fill="#43b84c"/><rect x="1.200" y="13.200" width="13.500" height=".700" fill="#7ad880"/></svg>
<div class="a" style="left:379.5px;top:1026px;width:102.5px;height:18px;overflow:hidden"><span class="t" style="left:-0.4px;top:1px;font-size:12px;line-height:16px;height:16px;color:#000;letter-spacing:-0.095px;">Partage_VM (\\VBoxSvr) (Z:)</span></div>
<svg width="16" height="16" viewBox="0 0 16 16" style="left:350px;top:1059px"><circle cx="10.500" cy="5.500" r="5" fill="#4a9ad8"/><path d="M7 3 Q10 1 13 2.500 Q14.500 5 13 7 Q10.500 6 9 7.500 Q7 6 7 3Z" fill="#7ac070" opacity=".8"/><circle cx="10.500" cy="5.500" r="5" fill="none" stroke="#2a6aa8" stroke-width=".6"/><rect x=".500" y="6.500" width="10" height="6.500" fill="#3aa0ea" stroke="#3a5a78" stroke-width=".9"/><path d="M1 7 L6 7 L2.500 12.500 L1 12.500Z" fill="#8ad0fa" opacity=".7"/><rect x="4.500" y="13.300" width="2" height="1.200" fill="#6a7a88"/><rect x="2.500" y="14.500" width="6" height=".9" fill="#8a9aa8"/></svg>
<span class="t" style="left:370.6px;top:1059px;font-size:12px;line-height:16px;height:16px;color:#000;letter-spacing:-0.220px;transform:scaleX(0.9437);transform-origin:0 50%;">Réseau</span>
<!-- Explorer content -->
<svg width="12" height="7" viewBox="0 0 12 7" style="left:491.5px;top:599px"><path d="M.600 .600 L5.800 5.800 L11 .600" fill="none" stroke="#6a6a6a" stroke-width="1.100"/></svg>
<span class="t" style="left:507.1px;top:592px;font-size:15px;line-height:20px;height:20px;color:#1e3287;letter-spacing:-0.216px;">Dossiers fréquents (6)</span>
<div class="a" style="left:657px;top:602px;width:785px;height:1px;background:#e2e2e2"></div>
<svg width="12" height="7" viewBox="0 0 12 7" style="left:491.5px;top:770px"><path d="M.600 .600 L5.800 5.800 L11 .600" fill="none" stroke="#6a6a6a" stroke-width="1.100"/></svg>
<span class="t" style="left:507.1px;top:763px;font-size:15px;line-height:20px;height:20px;color:#1e3287;letter-spacing:-0.220px;transform:scaleX(0.9825);transform-origin:0 50%;">Fichiers récents (1)</span>
<div class="a" style="left:636px;top:773px;width:806px;height:1px;background:#e2e2e2"></div>
<svg width="40" height="41" viewBox="0 0 40 41" style="left:528px;top:631px"><defs><linearGradient id="fgG0" x1="0" y1="0" x2="1" y2="1"><stop offset="0" stop-color="#f0cb68"/><stop offset="1" stop-color="#fbe08e"/></linearGradient><linearGradient id="fsG0" x1="0" y1="0" x2="1" y2="0"><stop offset="0" stop-color="#fde9a6"/><stop offset="1" stop-color="#f8d987"/></linearGradient></defs><path d="M0 0 H25 V34 H0 Z" fill="url(#fgG0)"/><path d="M0 0 L8.700 7 V30.500 L8 40.200 L0 34.500 Z" fill="url(#fsG0)"/><path d="M8 40.200 L11 39 L8.400 36Z" fill="#c9ccd2" opacity=".5"/><defs><linearGradient id="odG0" x1="0" y1="0" x2="1" y2="1"><stop offset="0" stop-color="#1a98f0"/><stop offset="1" stop-color="#2aa8fa"/></linearGradient></defs><rect x="11" y="17" width="28" height="20" fill="url(#odG0)"/><path d="M18 37 L30 17 L36 17 L25 37Z" fill="#5abcfc" opacity=".45"/><rect x="11" y="34.500" width="28" height="2.500" fill="#0a60b4"/><rect x="12.500" y="35.300" width="19" height="1" fill="#d8ecfa"/><rect x="33" y="35.300" width="1.200" height="1" fill="#fff"/><rect x="35.500" y="35.300" width="1.200" height="1" fill="#fff"/><rect x="37.500" y="35.300" width="1" height="1" fill="#fff"/></svg>
<span class="t" style="left:573.1px;top:626px;font-size:12px;line-height:16px;height:16px;color:#000;letter-spacing:-0.220px;">Bureau</span>
<span class="t" style="left:573.1px;top:642px;font-size:12px;line-height:16px;height:16px;color:#6d6d6d;letter-spacing:-0.220px;transform:scaleX(0.9432);transform-origin:0 50%;">Ce PC</span>
<svg width="11" height="11" viewBox="0 0 11 11" style="left:573.5px;top:660px"><path d="M6.300 .800 L10.200 4.700 L9.300 5.300 L8.600 5 L6.500 7.200 C6.900 8.300 6.700 9.300 6 10 L3.800 7.800 L.800 10.700 L.400 10.600 L.300 10.200 L3.200 7.200 L1 5 C1.700 4.300 2.700 4.100 3.800 4.500 L6 2.400 L5.700 1.700 Z" fill="#8a8f96"/></svg>
<svg width="40" height="41" viewBox="0 0 40 41" style="left:756px;top:631px"><defs><linearGradient id="fgG1" x1="0" y1="0" x2="1" y2="1"><stop offset="0" stop-color="#f0cb68"/><stop offset="1" stop-color="#fbe08e"/></linearGradient><linearGradient id="fsG1" x1="0" y1="0" x2="1" y2="0"><stop offset="0" stop-color="#fde9a6"/><stop offset="1" stop-color="#f8d987"/></linearGradient></defs><path d="M0 0 H25 V34 H0 Z" fill="url(#fgG1)"/><path d="M0 0 L8.700 7 V30.500 L8 40.200 L0 34.500 Z" fill="url(#fsG1)"/><path d="M8 40.200 L11 39 L8.400 36Z" fill="#c9ccd2" opacity=".5"/><path d="M19.300 10 H27.500 V23.300 H37 L23.400 37.600 L8 23.300 H19.300 Z" fill="#2a88e0"/><path d="M19.300 10 H27.500 V14 H19.300Z" fill="#4ea4f0"/></svg>
<span class="t" style="left:801.1px;top:626px;font-size:12px;line-height:16px;height:16px;color:#000;letter-spacing:-0.161px;">Téléchargements</span>
<span class="t" style="left:801.1px;top:642px;font-size:12px;line-height:16px;height:16px;color:#6d6d6d;letter-spacing:-0.220px;transform:scaleX(0.9432);transform-origin:0 50%;">Ce PC</span>
<svg width="11" height="11" viewBox="0 0 11 11" style="left:801.5px;top:660px"><path d="M6.300 .800 L10.200 4.700 L9.300 5.300 L8.600 5 L6.500 7.200 C6.900 8.300 6.700 9.300 6 10 L3.800 7.800 L.800 10.700 L.400 10.600 L.300 10.200 L3.200 7.200 L1 5 C1.700 4.300 2.700 4.100 3.800 4.500 L6 2.400 L5.700 1.700 Z" fill="#8a8f96"/></svg>
<svg width="40" height="41" viewBox="0 0 40 41" style="left:984px;top:631px"><defs><linearGradient id="fgG2" x1="0" y1="0" x2="1" y2="1"><stop offset="0" stop-color="#f0cb68"/><stop offset="1" stop-color="#fbe08e"/></linearGradient><linearGradient id="fsG2" x1="0" y1="0" x2="1" y2="0"><stop offset="0" stop-color="#fde9a6"/><stop offset="1" stop-color="#f8d987"/></linearGradient></defs><path d="M0 0 H25 V34 H0 Z" fill="url(#fgG2)"/><path d="M0 0 L8.700 7 V30.500 L8 40.200 L0 34.500 Z" fill="url(#fsG2)"/><path d="M8 40.200 L11 39 L8.400 36Z" fill="#c9ccd2" opacity=".5"/><g transform="translate(-1,-2.300)"><path d="M14.500 11.500 H29.500 L35.500 17.500 V39.500 H14.500 Z" fill="#fff" stroke="#8e8e8e" stroke-width="1"/><path d="M29.500 11.500 V17.500 H35.500" fill="#eee" stroke="#8e8e8e" stroke-width=".9"/><g stroke="#3c8ad8" stroke-width="1.100"><path d="M17 21.500 H33 M17 24.500 H33 M25 15.500 H29 M25 18.500 H28"/></g><path d="M18 19 L20.500 13.500 L23 19 M19 17 H22" stroke="#3c8ad8" stroke-width="1.100" fill="none"/><g stroke="#9a9a9a" stroke-width="1"><path d="M17 27.500 H24 M17 30.500 H24 M17 33.500 H33 M17 36.500 H33"/></g><rect x="26" y="26.500" width="7" height="5" fill="#3b7a57"/><rect x="26" y="26.500" width="7" height="2" fill="#6aa6dc"/></g></svg>
<span class="t" style="left:1029.1px;top:626px;font-size:12px;line-height:16px;height:16px;color:#000;letter-spacing:0.177px;">Documents</span>
<span class="t" style="left:1029.1px;top:642px;font-size:12px;line-height:16px;height:16px;color:#6d6d6d;letter-spacing:-0.220px;transform:scaleX(0.9432);transform-origin:0 50%;">Ce PC</span>
<svg width="11" height="11" viewBox="0 0 11 11" style="left:1029.5px;top:660px"><path d="M6.300 .800 L10.200 4.700 L9.300 5.300 L8.600 5 L6.500 7.200 C6.900 8.300 6.700 9.300 6 10 L3.800 7.800 L.800 10.700 L.400 10.600 L.300 10.200 L3.200 7.200 L1 5 C1.700 4.300 2.700 4.100 3.800 4.500 L6 2.400 L5.700 1.700 Z" fill="#8a8f96"/></svg>
<svg width="40" height="41" viewBox="0 0 40 41" style="left:1212px;top:631px"><defs><linearGradient id="fgG3" x1="0" y1="0" x2="1" y2="1"><stop offset="0" stop-color="#f0cb68"/><stop offset="1" stop-color="#fbe08e"/></linearGradient><linearGradient id="fsG3" x1="0" y1="0" x2="1" y2="0"><stop offset="0" stop-color="#fde9a6"/><stop offset="1" stop-color="#f8d987"/></linearGradient></defs><path d="M0 0 H25 V34 H0 Z" fill="url(#fgG3)"/><path d="M0 0 L8.700 7 V30.500 L8 40.200 L0 34.500 Z" fill="url(#fsG3)"/><path d="M8 40.200 L11 39 L8.400 36Z" fill="#c9ccd2" opacity=".5"/><defs><linearGradient id="oiG3" x1="0" y1="0" x2="0" y2="1"><stop offset="0" stop-color="#79b5ea"/><stop offset=".45" stop-color="#dcebf6"/><stop offset=".6" stop-color="#4c7a5a"/><stop offset="1" stop-color="#1f4a36"/></linearGradient></defs><rect x="11.500" y="18.500" width="27" height="20" fill="#fff" stroke="#9a9a9a" stroke-width="1"/><rect x="13.500" y="20.500" width="23" height="16" fill="url(#oiG3)"/><path d="M13.500 30 Q21 25 28 29 L36.500 33 V36.500 H13.500Z" fill="#2f5f48"/><path d="M22 36.500 L36.500 32 V36.500Z" fill="#e8eef2" opacity=".85"/></svg>
<span class="t" style="left:1257.1px;top:626px;font-size:12px;line-height:16px;height:16px;color:#000;letter-spacing:-0.093px;">Images</span>
<span class="t" style="left:1257.1px;top:642px;font-size:12px;line-height:16px;height:16px;color:#6d6d6d;letter-spacing:-0.220px;transform:scaleX(0.9432);transform-origin:0 50%;">Ce PC</span>
<svg width="11" height="11" viewBox="0 0 11 11" style="left:1257.5px;top:660px"><path d="M6.300 .800 L10.200 4.700 L9.300 5.300 L8.600 5 L6.500 7.200 C6.900 8.300 6.700 9.300 6 10 L3.800 7.800 L.800 10.700 L.400 10.600 L.300 10.200 L3.200 7.200 L1 5 C1.700 4.300 2.700 4.100 3.800 4.500 L6 2.400 L5.700 1.700 Z" fill="#8a8f96"/></svg>
<svg width="40" height="41" viewBox="0 0 40 41" style="left:528px;top:695px"><defs><linearGradient id="fgG4" x1="0" y1="0" x2="1" y2="1"><stop offset="0" stop-color="#f0cb68"/><stop offset="1" stop-color="#fbe08e"/></linearGradient><linearGradient id="fsG4" x1="0" y1="0" x2="1" y2="0"><stop offset="0" stop-color="#fde9a6"/><stop offset="1" stop-color="#f8d987"/></linearGradient></defs><path d="M0 0 H25 V34 H0 Z" fill="url(#fgG4)"/><path d="M0 0 L8.700 7 V30.500 L8 40.200 L0 34.500 Z" fill="url(#fsG4)"/><path d="M8 40.200 L11 39 L8.400 36Z" fill="#c9ccd2" opacity=".5"/><g transform="translate(-0.500,-4.500) scale(1,1.070)"><path d="M25 8 C27.500 14 36 17 36 26 C36 30 34.500 33 32.500 35 C34 30 32.500 24 28.500 21 V33.500 C28.500 37.500 24.500 40 20.500 40 C16.500 40 14 37.800 14 35 C14 31.800 17.500 29.500 21.500 29.500 C22.800 29.500 24 29.700 25 30.200 Z" fill="#1e90ea"/></g></svg>
<span class="t" style="left:573.1px;top:690px;font-size:12px;line-height:16px;height:16px;color:#000;letter-spacing:0.206px;">Musique</span>
<span class="t" style="left:573.1px;top:706px;font-size:12px;line-height:16px;height:16px;color:#6d6d6d;letter-spacing:-0.220px;transform:scaleX(0.9432);transform-origin:0 50%;">Ce PC</span>
<svg width="40" height="41" viewBox="0 0 40 41" style="left:756px;top:695px"><defs><linearGradient id="fgG5" x1="0" y1="0" x2="1" y2="1"><stop offset="0" stop-color="#f0cb68"/><stop offset="1" stop-color="#fbe08e"/></linearGradient><linearGradient id="fsG5" x1="0" y1="0" x2="1" y2="0"><stop offset="0" stop-color="#fde9a6"/><stop offset="1" stop-color="#f8d987"/></linearGradient></defs><path d="M0 0 H25 V34 H0 Z" fill="url(#fgG5)"/><path d="M0 0 L8.700 7 V30.500 L8 40.200 L0 34.500 Z" fill="url(#fsG5)"/><path d="M8 40.200 L11 39 L8.400 36Z" fill="#c9ccd2" opacity=".5"/><g transform="translate(-2.500,-3.500)"><rect x="15" y="13" width="24" height="27" fill="#3a3a3a"/><rect x="19.500" y="14" width="15" height="12" fill="#3f7fd6"/><rect x="19.500" y="27" width="15" height="12" fill="#4a8ade"/><circle cx="24" cy="19" r="3.200" fill="#e8c020"/><circle cx="30" cy="20" r="2.800" fill="#d84030"/><circle cx="27" cy="17" r="2" fill="#3aa048"/><circle cx="24.500" cy="32" r="3" fill="#e8c020"/><circle cx="30.500" cy="33" r="2.600" fill="#d84030"/><rect x="19.500" y="23" width="15" height="3" fill="#2c8a3c"/><rect x="19.500" y="36.500" width="15" height="2.500" fill="#2c8a3c"/><rect x="16.200" y="14.5" width="2" height="2.200" fill="#e8e8e8"/><rect x="35.800" y="14.5" width="2" height="2.200" fill="#e8e8e8"/><rect x="16.200" y="18.2" width="2" height="2.200" fill="#e8e8e8"/><rect x="35.800" y="18.2" width="2" height="2.200" fill="#e8e8e8"/><rect x="16.200" y="21.9" width="2" height="2.200" fill="#e8e8e8"/><rect x="35.800" y="21.9" width="2" height="2.200" fill="#e8e8e8"/><rect x="16.200" y="25.6" width="2" height="2.200" fill="#e8e8e8"/><rect x="35.800" y="25.6" width="2" height="2.200" fill="#e8e8e8"/><rect x="16.200" y="29.3" width="2" height="2.200" fill="#e8e8e8"/><rect x="35.800" y="29.3" width="2" height="2.200" fill="#e8e8e8"/><rect x="16.200" y="33.0" width="2" height="2.200" fill="#e8e8e8"/><rect x="35.800" y="33.0" width="2" height="2.200" fill="#e8e8e8"/><rect x="16.200" y="36.7" width="2" height="2.200" fill="#e8e8e8"/><rect x="35.800" y="36.7" width="2" height="2.200" fill="#e8e8e8"/></g></svg>
<span class="t" style="left:801.1px;top:690px;font-size:12px;line-height:16px;height:16px;color:#000;letter-spacing:-0.114px;">Vidéos</span>
<span class="t" style="left:801.1px;top:706px;font-size:12px;line-height:16px;height:16px;color:#6d6d6d;letter-spacing:-0.220px;transform:scaleX(0.9432);transform-origin:0 50%;">Ce PC</span>
<div class="a" style="left:500px;top:795px;width:949px;height:26px;background:#cce8ff;border:1px solid #99d1ff;box-sizing:border-box"></div>
<svg width="17" height="22" viewBox="0 0 17 22" style="left:523px;top:797px"><path d="M.500 .500 H12 L16.500 5 V21.500 H.500 Z" fill="#fcfcfc" stroke="#a8a8a8" stroke-width="1"/><path d="M12 .500 V5 H16.500" fill="#e4e4e4" stroke="#a8a8a8" stroke-width=".9"/><g stroke="#c4c4c4" stroke-width="1"><path d="M2.500 5.500 H10.500 M2.500 7.500 H14.500 M2.500 9.500 H14.500 M2.500 11.500 H14.500 M2.500 13.500 H14.500 M2.500 15.500 H14.500 M2.500 17.500 H14.500 M2.500 19.500 H14.500"/></g></svg>
<span class="t" style="left:552.6px;top:800px;font-size:12px;line-height:16px;height:16px;color:#000;letter-spacing:-0.220px;transform:scaleX(0.8992);transform-origin:0 50%;">SOS !</span>
<span class="t" style="left:1004.1px;top:800px;font-size:12px;line-height:16px;height:16px;color:#6d6d6d;letter-spacing:-0.220px;">Ce PC\Images</span>
<span class="t" style="left:339.6px;top:1100px;font-size:12px;line-height:16px;height:16px;color:#1c2d6b;letter-spacing:-0.075px;">7 élément(s)</span>
<div class="a" style="left:415px;top:1100px;width:1px;height:16px;background:#e8e8e8"></div>
<span class="t" style="left:425.6px;top:1100px;font-size:12px;line-height:16px;height:16px;color:#1c2d6b;letter-spacing:-0.128px;white-space:pre;">1 élément sélectionné  537 octet(s)</span>
<div class="a" style="left:618px;top:1100px;width:1px;height:16px;background:#e8e8e8"></div>
<svg width="17" height="13" viewBox="0 0 17 13" style="left:1404px;top:1100px"><rect x=".500" y=".500" width="4" height="12" fill="#fff" stroke="#8a8a8a" stroke-width=".8"/><rect x="2" y="2" width="1.200" height="1.200" fill="#555"/><rect x="2" y="6" width="1.200" height="1.200" fill="#3a80d0"/><rect x="2" y="10" width="1.200" height="1.200" fill="#d03030"/><g stroke="#555" stroke-width="1" stroke-dasharray="3 1.500"><path d="M6.500 2.500 H17 M6.500 6.500 H17 M6.500 10.500 H17"/></g></svg>
<svg width="14" height="12" viewBox="0 0 14 12" style="left:1427px;top:1100.500px"><rect x=".500" y=".500" width="13" height="11" fill="#fff" stroke="#7a7a7a" stroke-width="1"/><rect x="2" y="2" width="10" height="8" fill="#5a9ae0"/><path d="M2 7 Q6 4.500 9 6.500 L12 8 V10 H2Z" fill="#2f5f48"/><rect x="2" y="2" width="10" height="2.500" fill="#9ac4ee"/></svg>
<!-- Windows taskbar -->
<div class="a" style="left:1px;top:1224px;width:1600px;height:40px;background:linear-gradient(90deg,#030102 0,#030102 180px,#0f0b0c 250px,#0f0b0c 1400px,#130709 1470px)"></div>
<svg width="17" height="17" viewBox="0 0 17 17" style="left:16.500px;top:1235.500px" fill="#fff"><path d="M0 2.300 L7 1.300 V8 H0Z M8 1.150 L17 0 V8 H8Z M0 9 H7 V15.700 L0 14.700Z M8 9 H17 V17 L8 15.850Z"/></svg>
<div class="a" style="left:49px;top:1224.500px;width:288px;height:39px;background:#f3f3f3;overflow:hidden">
<svg width="80" height="39" viewBox="0 0 80 39" style="left:208px;top:0">
<defs><filter id="lb" x="-20%" y="-20%" width="140%" height="140%" color-interpolation-filters="sRGB"><feGaussianBlur stdDeviation=".55"/></filter>
<linearGradient id="snw" x1="0" y1="0" x2="1" y2="0"><stop offset="0" stop-color="#9fc3dc"/><stop offset=".3" stop-color="#d2e6f3"/><stop offset="1" stop-color="#c4def0"/></linearGradient>
<linearGradient id="lpb" x1="0" y1="0" x2="1" y2="0"><stop offset="0" stop-color="#b9b5b0"/><stop offset=".45" stop-color="#d9d2c8"/><stop offset="1" stop-color="#ece6dc"/></linearGradient></defs>
<path d="M.700 39 Q4 31.500 13 30.700 Q24 30.500 34 33.500 Q52 36.500 66 35.200 Q76 34.500 79.600 36 V39Z" fill="url(#snw)"/>
<g filter="url(#lb)">
<path d="M20.300 30 Q22 23.500 28.600 21 Q32 17.500 34 15.500 L54.700 17 Q58.500 22 59.500 28 Q62.500 33.500 63.600 38 L45 38.500 Q38 36 33 33 Q26 31 20.300 30Z" fill="url(#lpb)"/>
<path d="M33.500 17 Q31.500 24 33 33 Q36 35 40 36.500 Q37 28 38 20Z" fill="#aeb0b2" opacity=".7"/>
<path d="M44 34 Q50 31 56 33 Q61 34.500 63.600 38.400 L46 38.500Z" fill="#e6e0d6"/>
<ellipse cx="44.300" cy="12.600" rx="10.300" ry="9.900" fill="#e9e3d8"/>
<path d="M34.200 9 Q33.300 3 36 2.600 Q38.500 3 40 5.500Z" fill="#ddd6ca"/><path d="M54.500 9 Q55.300 3 52.600 2.600 Q50 3 48.600 5.500Z" fill="#ddd6ca"/>
<path d="M35 8.500 Q34.600 4.500 36.200 4 Q37.500 4.800 38 6.500Z" fill="#5a5e68"/><path d="M53.700 8.500 Q54.100 4.500 52.500 4 Q51.200 4.800 50.700 6.500Z" fill="#5a5e68"/>
<path d="M41.500 12 Q44.200 9 47 12 Q49 17 46.500 21 Q44.200 22.800 42 21 Q39.500 17 41.500 12Z" fill="#f7f5f1"/>
<ellipse cx="39.900" cy="10.900" rx="1.700" ry="1" fill="#9cc8dc"/><ellipse cx="47.900" cy="10.900" rx="1.700" ry="1" fill="#9cc8dc"/>
<circle cx="39.900" cy="10.900" r=".5" fill="#2a3a4a"/><circle cx="47.900" cy="10.900" r=".5" fill="#2a3a4a"/>
<path d="M42.600 15.600 Q44.100 14.900 45.600 15.600 L44.100 17.500Z" fill="#e08880"/>
<path d="M42.300 19.400 Q44.100 20.400 45.900 19.400 Q44.100 21.300 42.300 19.400Z" fill="#3a2a30"/>
<g fill="#70707a" opacity=".85"><circle cx="40" cy="5.800" r=".6"/><circle cx="43" cy="4.800" r=".55"/><circle cx="46.500" cy="5" r=".55"/><circle cx="49.500" cy="6.200" r=".6"/><circle cx="51.500" cy="14" r=".6"/><circle cx="52" cy="17" r=".6"/>
<ellipse cx="28" cy="26" rx="1.300" ry=".6"/><ellipse cx="25" cy="28.500" rx="1.200" ry=".6"/><ellipse cx="36" cy="25" rx="1.200" ry=".6"/><ellipse cx="40" cy="28" rx="1.300" ry=".6"/><ellipse cx="53" cy="25.500" rx="1.200" ry=".7"/><ellipse cx="56" cy="29" rx="1.200" ry=".6"/><ellipse cx="51" cy="28.500" rx="1.100" ry=".6"/><ellipse cx="41" cy="33" rx="1.300" ry=".6"/><ellipse cx="48" cy="33.500" rx="1.100" ry=".5"/></g>
</g>
</svg>
</div>
<svg width="17" height="17" viewBox="0 0 17 17" style="left:60.500px;top:1235.500px"><circle cx="10.500" cy="6.500" r="5.200" fill="none" stroke="#222" stroke-width="1.300"/><path d="M6.800 10.200 L.800 16.200" stroke="#222" stroke-width="1.500"/></svg>
<span class="t" style="left:89.1px;top:1234.5px;font-size:15px;line-height:20px;height:20px;color:#3d3d3d;letter-spacing:-0.085px;">Taper ici pour rechercher</span>
<svg width="18" height="17" viewBox="0 0 18 17" style="left:352px;top:1235px" fill="none" stroke="#fff" stroke-width="1.200"><rect x="1.600" y="5.600" width="10.200" height="7.600"/><path d="M.600 2 H12 M.600 15.300 H12 M15.500 .800 V4.500 M15.500 9 V15.800"/><rect x="14.300" y="5.300" width="2.600" height="2.600" fill="#fff" stroke="none"/></svg>
<svg width="24" height="24" viewBox="0 0 48 48" style="left:400px;top:1232px">
<defs><linearGradient id="tEG1" x1="0" y1="0.300" x2="1" y2="0.550"><stop offset="0" stop-color="#2a9fe8"/><stop offset=".45" stop-color="#30bfd6"/><stop offset=".75" stop-color="#4ad090"/><stop offset="1" stop-color="#74e456"/></linearGradient><linearGradient id="tEG2" x1="0" y1="0" x2="0.300" y2="1"><stop offset="0" stop-color="#1d8de4"/><stop offset="1" stop-color="#1670d2"/></linearGradient></defs><path d="M0.500 22.500 C1.500 9 12 0 24.500 0 C38.500 0 48.500 11 48 23 C47.600 29.500 41.500 32.500 34.500 32 C30.500 31.600 27.800 29.800 28.600 27.500 C29.800 25.500 30 22.500 27.800 20.500 C24.500 17 19 12.800 11.500 12.600 C6 13 1.500 17 0.500 22.500 Z" fill="url(#tEG1)"/>
<path d="M0.500 22.500 C1.500 16.500 6 12.800 12 12.600 C19.500 12.700 25 17 28.300 22 C25.500 19.300 21.500 19 19 20.500 C15 23 13 29 13.600 34 C14.200 39.500 17 44.500 22 47.900 C9.500 47 -0.500 36 0.500 22.500 Z" fill="url(#tEG2)"/>
<path d="M20.200 21.500 C16 24.500 13.500 30 14 35 C14.600 40.500 17.500 45 22 47.900 C29 48.500 35.500 46 40 42 C42.200 40 43.800 38 44.600 36.300 C45 35.300 44.200 34.900 43.400 35.500 C40 37.800 35.500 38.300 31.500 37 C26 35 21.500 30 20.200 21.500 Z" fill="#1057a8"/>
<path d="M20.200 21.500 C18 23.500 16.800 28 17.500 33 C19 38 24 43 31 44 C26 41 21 32 20.200 21.500Z" fill="#0c4a94" opacity=".5"/>
</svg>
<div class="a" style="left:437px;top:1224px;width:48px;height:40px;background:#3b3838"></div>
<div class="a" style="left:437px;top:1262px;width:48px;height:2px;background:#76b9ed"></div>
<svg width="23" height="19" viewBox="0 0 23 19" style="left:449.500px;top:1234.500px"><path d="M0 1 H8 L10 3 H22 V5 H0Z" fill="#e5a52a"/><rect x="0" y="4" width="22.500" height="14.500" fill="#fcd462"/><rect x="0" y="4" width="22.500" height="1.300" fill="#fde392"/><path d="M5 18.500 V10.500 H17.500 V18.500 H14.500 V14 H8 V18.500Z" fill="#3a8ee0"/><rect x="5" y="10.500" width="12.500" height="1.800" fill="#5aa6ee"/></svg>
<svg width="23" height="24" viewBox="0 0 23 24" style="left:498px;top:1231.500px"><path d="M7 8 V5.500 C7 2.500 9 1 11.500 1 C14 1 16 2.500 16 5.500 V8" fill="none" stroke="#fff" stroke-width="1.500"/><path d="M0 7 H23 V21.500 Q23 23.500 21 23.500 H2 Q0 23.500 0 21.500Z" fill="#fff"/><rect x="6" y="10" width="5" height="5" fill="#f25022"/><rect x="12" y="10" width="5" height="5" fill="#7fba00"/><rect x="6" y="16" width="5" height="5" fill="#00a4ef"/><rect x="12" y="16" width="5" height="5" fill="#ffb900"/></svg>
<svg width="24" height="20" viewBox="0 0 24 20" style="left:546.800px;top:1233.800px"><path d="M0 6.500 L12 0 L24 6.500 V19.500 H0Z" fill="#fff"/><path d="M0 6.500 L24 6.500 L12.500 13 L16 18Z" fill="#0f0b0c"/></svg>
<svg width="24" height="23" viewBox="0 0 24 23" style="left:595.500px;top:1232.500px">
<defs><linearGradient id="npg" x1="0" y1="0" x2="1" y2="1"><stop offset="0" stop-color="#eaf8fb"/><stop offset=".5" stop-color="#a8d8e4"/><stop offset="1" stop-color="#5aa2b8"/></linearGradient></defs>
<path d="M8 1 L22 3 L21.500 21 L4 19Z" fill="#cdbd8e"/><path d="M7.500 0 L20.500 2 L17.500 20 L1 16.500Z" fill="url(#npg)"/>
<path d="M6.800 4 L19 6 M5.800 7 L18.500 9 M4.800 10 L18 12 M3.800 13 L17.500 15" stroke="#7fb8c8" stroke-width=".6" fill="none" opacity=".8"/>
<path d="M1 16.500 L17.500 20 L17.200 21.600 L.600 18Z" fill="#4a8ea4"/><path d="M20.500 2 L23.300 3 L22 21.500 L17.500 20Z" fill="#dccb98"/>
<path d="M7.500 0 L20.500 2 L20.200 3.200 L7.200 1.200Z" fill="#f6fcfe"/>
</svg>
<div class="a" style="left:588.500px;top:1262px;width:39.500px;height:2px;background:#76b9ed"></div>
<svg width="25" height="17" viewBox="0 0 25 17" style="left:1196.500px;top:1235.500px" fill="none" stroke="#fff" stroke-width="1.200"><path d="M4 .600 H24 V14 Q24 16.400 21.500 16.400 H3 Q.600 16.400 .600 14 V4 H4"/><path d="M4 .600 V14 Q4 16.400 2.200 16.400"/><rect x="7" y="4.500" width="6.500" height="5.500"/><path d="M16 4.500 H21 M16 7.200 H21 M16 10 H21 M7 13 H21"/></svg>
<span class="t" style="left:1228.6px;top:1234.5px;font-size:15px;line-height:20px;height:20px;color:#ffffff;letter-spacing:-0.220px;transform:scaleX(0.9166);transform-origin:0 50%;">CAC40 index</span>
<span class="t" style="left:1316.6px;top:1234.5px;font-size:15px;line-height:20px;height:20px;color:#1fbf2c;letter-spacing:-0.220px;transform:scaleX(0.9264);transform-origin:0 50%;">+0,54%</span>
<svg width="100" height="24" viewBox="1384 1232 100 24" style="left:1384px;top:1232px" fill="none" stroke="#fff">
<path d="M1388.300 1246.800 L1394 1240.900 L1399.700 1246.800" stroke-width="1.300"/>
<g stroke-width="1.100"><rect x="1413.500" y="1240.900" width="7.200" height="6" rx="1.300"/><path d="M1420.700 1243 L1423.800 1241.300 V1246.500 L1420.700 1244.800"/><path d="M1414.200 1238.300 Q1414.600 1236.600 1416.400 1236.600 H1419.400 Q1421.200 1236.600 1421.600 1238.300 M1414.200 1249.500 Q1414.600 1251.200 1416.400 1251.200 H1419.400 Q1421.200 1251.200 1421.600 1249.500"/></g>
<path d="M1434.300 1241.700 H1436.300 L1439.500 1238.400 V1249.700 L1436.300 1246.400 H1434.300Z" stroke-width="1.100"/>
<circle cx="1445.600" cy="1247.300" r="4.500" fill="#e81123" stroke="none"/><path d="M1443.600 1245.300 L1447.600 1249.300 M1447.600 1245.300 L1443.600 1249.300" stroke-width="1.200"/>
<g stroke-width="1"><circle cx="1466.500" cy="1244.500" r="7.500"/><ellipse cx="1466.500" cy="1244.500" rx="3.600" ry="7.500"/><path d="M1466.500 1237 V1252 M1459.600 1241.500 H1473.400 M1459.600 1247.500 H1468"/></g>
<circle cx="1471" cy="1248.600" r="3.400" fill="#0f0b0c" stroke-width="1"/><path d="M1468.800 1246.400 L1473.200 1250.800" stroke-width="1"/>
</svg>
<span class="t" style="left:1499.1px;top:1227px;font-size:12px;line-height:16px;height:16px;color:#ffffff;letter-spacing:-0.220px;transform:scaleX(0.9263);transform-origin:0 50%;">15:49</span>
<span class="t" style="left:1484.1px;top:1245px;font-size:12px;line-height:16px;height:16px;color:#ffffff;letter-spacing:-0.220px;">23/10/2025</span>
<svg width="17" height="16" viewBox="0 0 17 16" style="left:1559.500px;top:1236px"><path d="M.700 .700 H16.300 V11.500 H11 L8.500 15 V11.500 H.700Z" fill="none" stroke="#fff" stroke-width="1.200"/></svg>
<div class="a" style="left:1596px;top:1224px;width:1px;height:40px;background:#5a5a5a"></div>
<!-- VirtualBox status bar icons -->
<svg width="300" height="18" viewBox="1296 1266 300 18" style="left:1296px;top:1266px">
<g><rect x="1297" y="1268" width="14" height="15" rx="1.500" fill="#3a8ee6"/><circle cx="1304" cy="1274.500" r="4.600" fill="#e8f2fc"/><circle cx="1304" cy="1274.500" r="1.500" fill="#3a8ee6"/><path d="M1299 1281 L1303 1277" stroke="#e8f2fc" stroke-width="1.500"/></g>
<g><circle cx="1323.500" cy="1275" r="7" fill="#8a8a8a"/><circle cx="1323.500" cy="1275" r="2" fill="#d8d8d8"/><circle cx="1323.500" cy="1275" r=".8" fill="#555"/></g>
<g fill="#6a6a6a" stroke="#9a9a9a" stroke-width=".8"><rect x="1340" y="1268.500" width="10" height="7"/><rect x="1336" y="1273.500" width="10" height="7"/><path d="M1339 1281 h4 v1.500 h-4z"/></g>
<g><path d="M1354 1281 L1363 1270 L1368 1274 L1358 1283 Q1354 1284 1354 1281Z" fill="#5ab4f6"/><path d="M1363 1270 L1366 1267 L1370 1271 L1368 1274Z" fill="#e8f2fc"/></g>
<g><path d="M1372 1269 H1378 L1380 1271 H1388 V1282 H1372Z" fill="#6cc0fa"/><rect x="1372" y="1272" width="16" height="10" fill="#7ccafc"/></g>
<g><rect x="1392" y="1267.500" width="15" height="11" fill="#e8f2fc" stroke="#2a7ad6" stroke-width="1.500"/><rect x="1395" y="1270.500" width="9" height="5" fill="#2a7ad6"/><rect x="1397" y="1279" width="5" height="2" fill="#9ab8d8"/><rect x="1394" y="1281" width="11" height="1.500" fill="#c8d8e8"/></g>
<g><rect x="1416" y="1267.500" width="10" height="8" fill="#2a6cc8"/><rect x="1411" y="1272" width="10" height="8" fill="#e8f2fc" stroke="#2a6cc8" stroke-width="1"/><rect x="1413" y="1277" width="10" height="6" fill="#3a8ee6"/></g>
<g><rect x="1430" y="1267" width="14" height="16" fill="#2a3a2a"/><path d="M1431 1281 L1437 1268 L1443 1281 M1433 1277 H1441" stroke="#5adc3a" stroke-width="1.800" fill="none"/><path d="M1431 1270 L1436 1275 M1443 1270 L1438 1275" stroke="#8af06a" stroke-width="1.300"/></g>
<g><circle cx="1456.500" cy="1275" r="7.300" fill="#3a8ee6"/><path d="M1452 1270 Q1456 1268 1459 1271 Q1458 1275 1454 1276 Q1451 1274 1452 1270Z" fill="#e8f2fc"/><path d="M1455 1283 L1462 1275 L1465 1279 L1459 1284Z" fill="#6adc3a"/><path d="M1457 1272 L1463 1274 L1458 1279Z" fill="#6adc3a"/></g>
<g><rect x="1467.500" y="1267.500" width="15" height="15" rx="2" fill="#3a8ee6"/><rect x="1469.500" y="1269.500" width="11" height="11" rx="1" fill="#e8f2fc"/><path d="M1473.500 1271 H1476.500 V1275 H1479 L1475 1279.500 L1471 1275 H1473.500Z" fill="#1a5ab6"/></g>
<g fill="#bdbdbd"><rect x="1597" y="1275" width="2" height="2"/><rect x="1597" y="1278.500" width="2" height="2"/><rect x="1593.500" y="1278.500" width="2" height="2"/><rect x="1597" y="1282" width="2" height="2"/><rect x="1593.500" y="1282" width="2" height="2"/><rect x="1590" y="1282" width="2" height="2"/></g>
</svg>
<span class="t" style="left:1487.1px;top:1268px;font-size:12px;line-height:16px;height:16px;color:#e4e4e4;letter-spacing:-0.220px;transform:scaleX(0.9786);transform-origin:0 50%;">F12 + CTRL + ALT</span>
<div class="a" id="vbframe" style="left:0;top:0;width:1602px;height:1286px;box-sizing:border-box;border:1px solid #474747;border-radius:8px"></div>
</body></html>
